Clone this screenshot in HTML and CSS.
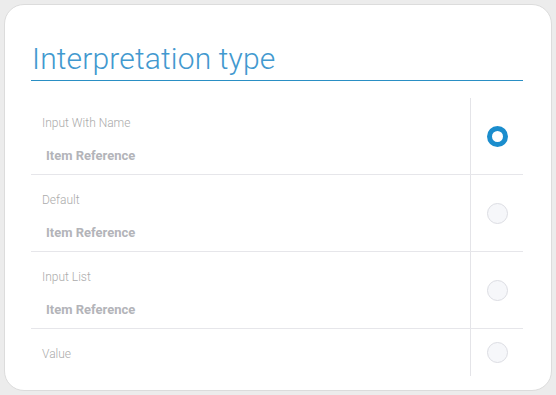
FILE: index.html
```html
<!DOCTYPE html>
<html>
<head>
<meta charset="utf-8">
<link rel="stylesheet" href="styles.css">
</head>
<body>
<div class="card">
  <h1 class="title">Interpretation type</h1>
  <div class="list">
    <div class="row">
      <div class="cell-text">
        <div class="label">Input With Name</div>
        <div class="value">Item Reference</div>
      </div>
      <div class="cell-radio"><span class="radio checked"></span></div>
    </div>
    <div class="row">
      <div class="cell-text">
        <div class="label">Default</div>
        <div class="value">Item Reference</div>
      </div>
      <div class="cell-radio"><span class="radio"></span></div>
    </div>
    <div class="row">
      <div class="cell-text">
        <div class="label">Input List</div>
        <div class="value">Item Reference</div>
      </div>
      <div class="cell-radio"><span class="radio"></span></div>
    </div>
    <div class="row last">
      <div class="cell-text">
        <div class="label">Value</div>
      </div>
      <div class="cell-radio"><span class="radio"></span></div>
    </div>
  </div>
</div>
</body>
</html>
```

FILE: styles.css
```css
* { box-sizing: border-box; }
html, body {
  margin: 0;
  padding: 0;
  background: #ececec;
  font-family: Roboto, "Liberation Sans", sans-serif;
}
body {
  padding: 4px;
  width: 556px;
  height: 395px;
}
.card {
  width: 548px;
  height: 387px;
  background: #fff;
  border: 1px solid #dcdcdc;
  border-radius: 20px;
  padding: 0 28px 0 26px;
}
.title {
  margin: 34px 0 0 0;
  font-size: 30px;
  font-weight: 300;
  letter-spacing: 0.15px;
  color: #4299cf;
  line-height: 40px;
  padding-left: 1px;
  padding-bottom: 1px;
  border-bottom: 1px solid #2a8fc4;
}
.list {
  margin-top: 17px;
}
.row {
  display: flex;
  height: 77px;
  border-bottom: 1px solid #e6e6ea;
}
.row.last {
  height: 47px;
  border-bottom: none;
}
.cell-text {
  flex: 1;
  padding: 18px 0 0 11px;
}
.label {
  font-size: 12px;
  font-weight: 300;
  line-height: 14px;
  color: #ababab;
}
.value {
  margin-top: 19px;
  padding-left: 4px;
  font-size: 13px;
  font-weight: 700;
  line-height: 14px;
  color: #b3b4b9;
}
.cell-radio {
  width: 53px;
  border-left: 1px solid #e4e4e8;
  display: flex;
  align-items: center;
  justify-content: center;
  padding-left: 1px;
}
.radio {
  width: 21px;
  height: 21px;
  border-radius: 50%;
  border: 1.5px solid #dcdde3;
  background: #f6f7fa;
}
.radio.checked {
  border: 5px solid #1b8dcd;
  background: #fff;
}
```
